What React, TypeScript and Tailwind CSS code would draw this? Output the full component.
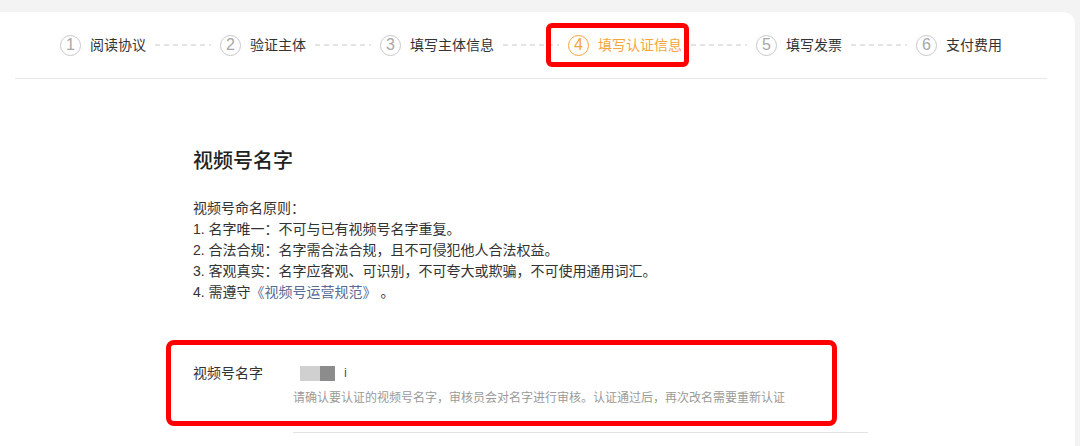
import React from 'react';

const steps = ['阅读协议', '验证主体', '填写主体信息', '填写认证信息', '填写发票', '支付费用'];
const activeStep = 3;

function Dash() {
  return (
    <svg width="56" height="2" className="mx-[9px] shrink-0">
      <line x1="0" y1="1" x2="56" y2="1" stroke="#c9c9c9" strokeWidth="1" strokeDasharray="5 4" />
    </svg>
  );
}

function App() {
  return (
    <div className="relative w-[1080px] h-[446px] overflow-hidden bg-[#f3f3f3] pt-3 pr-[5px] font-['Liberation_Sans','Noto_Sans_CJK_SC',sans-serif] text-[#333]">
      <div className="h-full bg-white rounded-tr-xl">
        {/* Steps */}
        <div className="ml-[15px] mr-[28px] h-[67px] border-b border-[#e6e6e6] pl-[45px] flex items-center">
          {steps.map((label, i) => {
            const active = i === activeStep;
            return (
              <React.Fragment key={label}>
                <div className="flex items-center shrink-0">
                  <span
                    className={
                      active
                        ? 'w-[21px] h-[21px] rounded-full border border-[#f5a53a] text-[#f5a53a] flex items-center justify-center text-[16px] font-light leading-none'
                        : 'w-[21px] h-[21px] rounded-full border border-[#c8c8c8] text-[#a8a8a8] flex items-center justify-center text-[16px] font-light leading-none'
                    }
                  >
                    {i + 1}
                  </span>
                  <span className={active ? 'ml-[9px] text-[14px] text-[#f5a53a]' : 'ml-[9px] text-[14px] text-[#333]'}>
                    {label}
                  </span>
                </div>
                {i < steps.length - 1 && <Dash />}
              </React.Fragment>
            );
          })}
        </div>

        {/* Content */}
        <div className="pl-[193px] pt-[68px]">
          <h2 className="text-[20px] leading-[28px] font-medium text-[#222]">视频号名字</h2>
          <div className="mt-[23px] text-[14px] leading-[21px] text-[#333]">
            <p>视频号命名原则：</p>
            <p>1. 名字唯一：不可与已有视频号名字重复。</p>
            <p>2. 合法合规：名字需合法合规，且不可侵犯他人合法权益。</p>
            <p>3. 客观真实：名字应客观、可识别，不可夸大或欺骗，不可使用通用词汇。</p>
            <p>
              4. 需遵守<span className="text-[#576b95]">《视频号运营规范》</span> 。
            </p>
          </div>

          {/* Form row */}
          <div className="mt-[60px] flex">
            <div className="w-[100px] shrink-0 text-[14px] leading-[20px]">视频号名字</div>
            <div>
              <div className="h-5 flex items-center pl-[7px]">
                <span className="w-5 h-[15px] bg-[#d0d0d0]" />
                <span className="w-[15px] h-[15px] bg-[#8c8c8c]" />
                <span className="ml-[9px] text-[13px] text-[#555]">i</span>
              </div>
              <p className="mt-[6px] text-[12px] leading-[18px] text-[#9a9a9a]">
                请确认要认证的视频号名字，审核员会对名字进行审核。认证通过后，再次改名需要重新认证
              </p>
            </div>
          </div>
          <div className="ml-[100px] mt-[25px] w-[575px] border-t border-[#e3e3e3]" />
        </div>
      </div>

      {/* Annotation highlights */}
      <div className="absolute left-[546px] top-[23px] w-[143px] h-[44px] border-[5px] border-[#ff0000] rounded-[6px]" />
      <div className="absolute left-[166px] top-[340px] w-[671px] h-[86px] border-[5px] border-[#ff0000] rounded-[8px]" />
    </div>
  );
}

export default App;
